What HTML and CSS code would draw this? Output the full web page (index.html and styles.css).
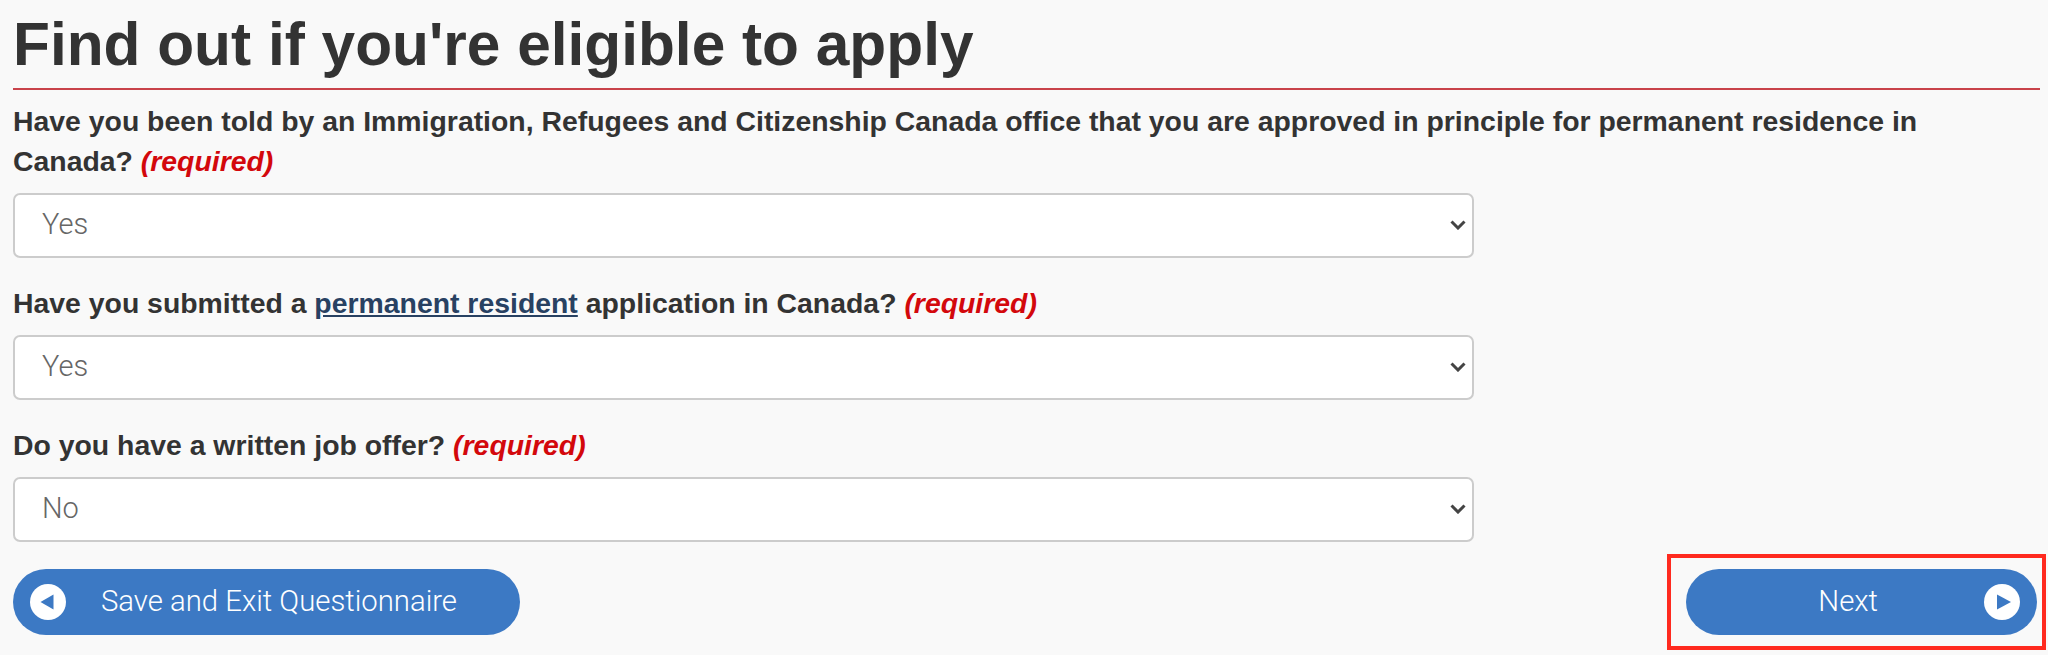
FILE: index.html
```html
<!DOCTYPE html>
<html lang="en">
  <head>
    <meta charset="UTF-8" />
    <meta name="viewport" content="width=device-width, initial-scale=1.0" />
    <title>Find out if you're eligible to apply</title>
    <link rel="stylesheet" href="styles.css">
  </head>
  <body>
    <h1 class="title">Find out if you're eligible to apply</h1>

    <form class="questions">
      <div class="field">
        <label class="question" for="q1">Have you been told by an Immigration, Refugees and Citizenship Canada office that you are approved in principle for permanent residence in Canada? <em class="required">(required)</em></label>
        <div class="select-wrap">
          <select class="select" id="q1">
            <option>Yes</option>
            <option>No</option>
          </select>
          <svg class="chevron" viewBox="0 0 16 10"><path d="M1.500 1.500 8 8l6.500-6.500" /></svg>
        </div>
      </div>

      <div class="field">
        <label class="question" for="q2">Have you submitted a <a class="link" href="#">permanent resident</a> application in Canada? <em class="required">(required)</em></label>
        <div class="select-wrap">
          <select class="select" id="q2">
            <option>Yes</option>
            <option>No</option>
          </select>
          <svg class="chevron" viewBox="0 0 16 10"><path d="M1.500 1.500 8 8l6.500-6.500" /></svg>
        </div>
      </div>

      <div class="field">
        <label class="question" for="q3">Do you have a written job offer? <em class="required">(required)</em></label>
        <div class="select-wrap">
          <select class="select" id="q3">
            <option>No</option>
            <option>Yes</option>
          </select>
          <svg class="chevron" viewBox="0 0 16 10"><path d="M1.500 1.500 8 8l6.500-6.500" /></svg>
        </div>
      </div>

      <div class="actions">
        <button class="btn btn-save" type="button">
          <svg class="btn-icon" viewBox="0 0 36 36"><circle cx="18" cy="18" r="18" fill="#fff" /><path d="M10.500 18 23.500 10.500v15z" fill="#3c79c4" /></svg>
          <span class="btn-label">Save and Exit Questionnaire</span>
        </button>
        <div class="highlight">
          <button class="btn btn-next" type="button">
            <span class="btn-label">Next</span>
            <svg class="btn-icon" viewBox="0 0 36 36"><circle cx="18" cy="18" r="18" fill="#fff" /><path d="M27 18 13 10.500v15z" fill="#3c79c4" /></svg>
          </button>
        </div>
      </div>
    </form>
  </body>
</html>
```

FILE: styles.css
```css
* {
  box-sizing: border-box;
}

body {
  margin: 0;
  padding: 0 2px 0 13px;
  background-color: #f9f9f9;
  color: #333;
  font-family: "Liberation Sans", Arial, sans-serif;
}

.title {
  margin: 0 6px 0 0;
  height: 90px;
  padding-top: 9px;
  border-bottom: 2px solid #c9434b;
  font-size: 60.4px;
  line-height: 70px;
  font-weight: bold;
}

.questions {
  display: flex;
  flex-direction: column;
  gap: 25px;
  padding-top: 11px;
}

.question {
  display: block;
  max-width: 1950px;
  font-size: 28.4px;
  line-height: 40px;
  font-weight: bold;
}

.required {
  color: #d3080c;
  font-style: italic;
}

.link {
  color: #284162;
}

.select-wrap {
  position: relative;
  width: 1461px;
  margin-top: 12px;
}

.select {
  display: block;
  width: 100%;
  height: 65px;
  padding: 0 27px 4px;
  border: 2px solid #ccc;
  border-radius: 7px;
  background-color: #fff;
  color: #666;
  font-family: Roboto, "Liberation Sans", sans-serif;
  font-size: 29px;
  font-weight: 300;
  appearance: none;
}

.chevron {
  position: absolute;
  top: 27px;
  right: 8px;
  width: 16px;
  height: 10px;
  fill: none;
  stroke: #444;
  stroke-width: 3;
}

.actions {
  display: flex;
  justify-content: space-between;
  align-items: center;
  margin-top: -13px;
}

.btn {
  display: flex;
  align-items: center;
  height: 66px;
  padding: 0 17px;
  border: 0;
  border-radius: 33px;
  background-color: #3c79c4;
  color: #fff;
  font-family: Roboto, "Liberation Sans", sans-serif;
  font-size: 29.3px;
  font-weight: 300;
}

.btn-label {
  margin-bottom: 2px;
}

.btn-save {
  width: 507px;
  gap: 35px;
}

.btn-next {
  justify-content: flex-end;
  width: 351px;
  gap: 106px;
}

.btn-icon {
  flex: none;
  width: 36px;
  height: 36px;
}

.highlight {
  padding: 11px 5px 11px 15px;
  border: 4px solid #ff2a1f;
}
```
